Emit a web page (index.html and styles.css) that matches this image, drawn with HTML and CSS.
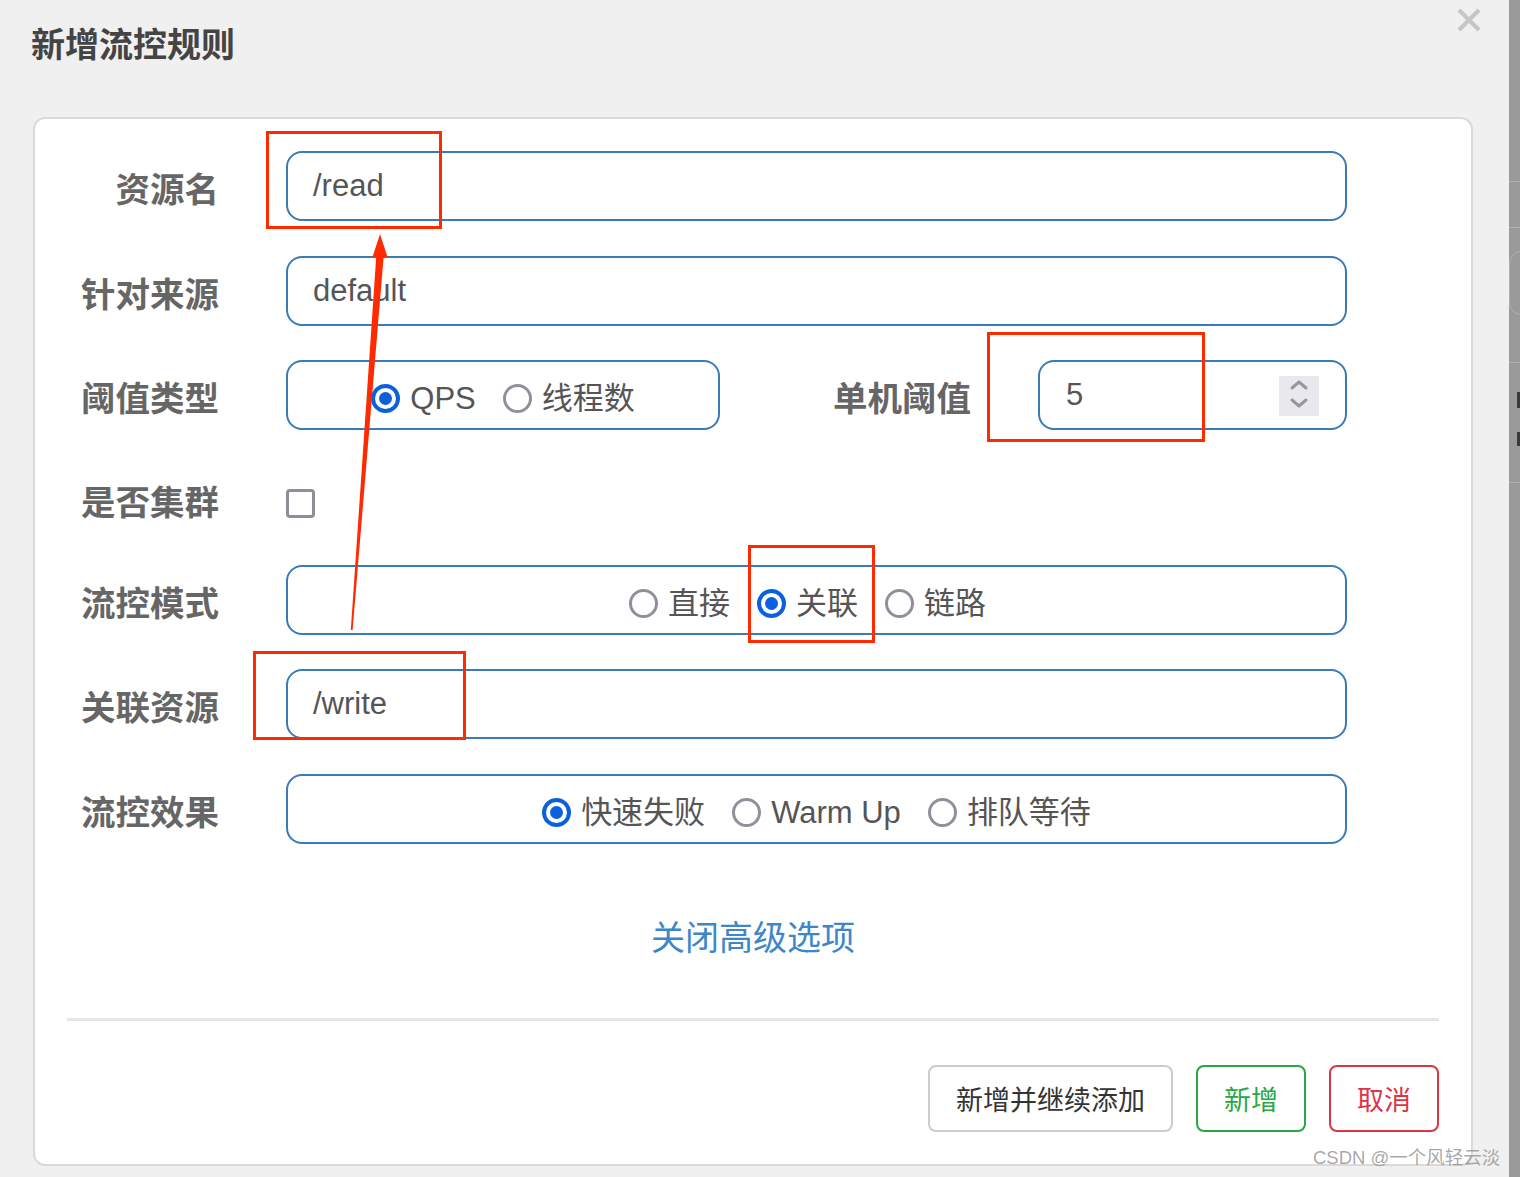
FILE: index.html
```html
<!DOCTYPE html>
<html lang="zh-CN">
<head>
<meta charset="utf-8">
<title>新增流控规则</title>
<link rel="stylesheet" href="styles.css">
</head>
<body>
<div class="page">
  <div class="modal">
    <div class="modal-header">
      <h1 class="title">新增流控规则</h1>
      <span class="close" aria-label="关闭">
        <svg width="24" height="24" viewBox="0 0 24 24"><path d="M2 2 L22 22 M22 2 L2 22" stroke="#c6c6c6" stroke-width="4.2" stroke-linecap="butt" fill="none"/></svg>
      </span>
    </div>
    <div class="card">
      <div class="form-row r1">
        <span class="label">资源名</span>
        <div class="control text">/read</div>
      </div>
      <div class="form-row r2">
        <span class="label">针对来源</span>
        <div class="control text">default</div>
      </div>
      <div class="form-row r3">
        <span class="label">阈值类型</span>
        <div class="control radios narrow">
          <span class="radio-item"><span class="radio on"></span>QPS</span>
          <span class="radio-item"><span class="radio"></span>线程数</span>
        </div>
        <span class="label label-mid">单机阈值</span>
        <div class="control number">
          <span class="num-value">5</span>
          <span class="spinner">
            <svg width="40" height="40" viewBox="0 0 40 40"><path d="M13 12 L20 6 L27 12 M13 24 L20 30 L27 24" stroke="#9797a0" stroke-width="3" fill="none" stroke-linecap="round" stroke-linejoin="round"/></svg>
          </span>
        </div>
      </div>
      <div class="form-row r4">
        <span class="label">是否集群</span>
        <span class="checkbox"></span>
      </div>
      <div class="form-row r5">
        <span class="label">流控模式</span>
        <div class="control radios shift">
          <span class="radio-item"><span class="radio"></span>直接</span>
          <span class="radio-item"><span class="radio on"></span>关联</span>
          <span class="radio-item"><span class="radio"></span>链路</span>
        </div>
      </div>
      <div class="form-row r6">
        <span class="label">关联资源</span>
        <div class="control text">/write</div>
      </div>
      <div class="form-row r7">
        <span class="label">流控效果</span>
        <div class="control radios">
          <span class="radio-item"><span class="radio on"></span>快速失败</span>
          <span class="radio-item"><span class="radio"></span>Warm Up</span>
          <span class="radio-item"><span class="radio"></span>排队等待</span>
        </div>
      </div>
      <div class="advanced"><a class="link">关闭高级选项</a></div>
      <div class="footer">
        <div class="divider"></div>
        <div class="actions">
          <button class="btn btn-default">新增并继续添加</button>
          <button class="btn btn-green">新增</button>
          <button class="btn btn-red">取消</button>
        </div>
      </div>
    </div>
  </div>
  <div class="strip">
    <div class="strip-line l1"></div>
    <div class="strip-line l2"></div>
    <div class="strip-round"></div>
    <div class="strip-line l3"></div>
    <div class="strip-frag f1"></div>
    <div class="strip-frag f2"></div>
    <div class="strip-line l4"></div>
  </div>
</div>

<div class="mark box1"></div>
<div class="mark box2"></div>
<div class="mark box3"></div>
<div class="mark box4"></div>
<svg class="arrow" width="1520" height="1177" viewBox="0 0 1520 1177">
  <polygon points="350.8,630 376.2,257 372.5,257 380,234 387.5,257 383.6,257 352.6,630" fill="#ff2a00"/>
</svg>
<div class="watermark">CSDN @一个风轻云淡</div>
</body>
</html>
```

FILE: styles.css
```css
* { box-sizing: border-box; }

html, body {
  margin: 0;
  padding: 0;
}

body {
  width: 1520px;
  height: 1177px;
  overflow: hidden;
  position: relative;
  font-family: "Liberation Sans", "Noto Sans CJK SC", sans-serif;
  background: #f0f0f0;
}

.page {
  display: flex;
  width: 1520px;
  height: 1177px;
}

.modal {
  width: 1509px;
  height: 1177px;
  background: #f0f0f0;
  display: flex;
  flex-direction: column;
}

.modal-header {
  height: 90px;
  display: flex;
  justify-content: space-between;
  align-items: flex-start;
  padding: 0 28px 0 31px;
}

.title {
  margin: 0;
  font-size: 34px;
  line-height: 90px;
  font-weight: 700;
  color: #444;
}

.close {
  margin-top: 8px;
  width: 24px;
  height: 24px;
  display: block;
}

.close svg { display: block; }

.card {
  margin: 27px 0 0 33px;
  width: 1440px;
  height: 1049px;
  background: #fff;
  border: 2px solid #dadada;
  border-radius: 12px;
  padding-top: 32px;
}

.form-row {
  display: flex;
  align-items: center;
  height: 70px;
}

.r1 { margin-bottom: 35px; }
.r2 { margin-bottom: 34px; }
.r3 { margin-bottom: 34px; }
.r4 { margin-bottom: 31px; }
.r5 { margin-bottom: 34px; }
.r6 { margin-bottom: 35px; }

.label {
  width: 184px;
  margin-right: 67px;
  text-align: right;
  font-size: 34.5px;
  font-weight: 700;
  color: #666;
  padding-top: 8px;
  line-height: 62px;
  flex-shrink: 0;
}

.label-mid {
  width: 251px;
  margin-right: 67px;
}

.control {
  width: 1061px;
  height: 70px;
  border: 2px solid #3a7ab8;
  border-radius: 16px;
  display: flex;
  align-items: center;
  flex-shrink: 0;
  font-size: 31px;
  color: #555;
}

.control.text {
  padding-left: 25px;
}

.control.radios {
  justify-content: center;
  gap: 27px;
  padding-top: 7px;
}

.control.narrow {
  width: 434px;
}

.control.shift {
  padding-right: 18px;
}

.radio-item {
  display: inline-flex;
  align-items: center;
  gap: 10px;
  line-height: 40px;
}

.radio {
  width: 29px;
  height: 29px;
  border-radius: 50%;
  border: 3px solid #908f9b;
  background: #fff;
  display: inline-flex;
  align-items: center;
  justify-content: center;
  flex-shrink: 0;
}

.radio.on {
  border: 4px solid #0b61dc;
}

.radio.on::after {
  content: "";
  width: 13px;
  height: 13px;
  border-radius: 50%;
  background: #0b61dc;
}

.control.number {
  width: 309px;
  padding-left: 26px;
  padding-right: 26px;
  justify-content: space-between;
}

.num-value {
  line-height: 40px;
}

.spinner {
  width: 40px;
  height: 40px;
  background: #e9e9ed;
  display: block;
  margin-top: 1px;
}

.spinner svg { display: block; }

.checkbox {
  width: 29px;
  height: 29px;
  border: 3px solid #8e8e98;
  border-radius: 4px;
  margin-top: 9px;
  background: #fff;
  display: block;
}

.advanced {
  margin-top: 64px;
  height: 60px;
  text-align: center;
}

.link {
  font-size: 34px;
  line-height: 60px;
  color: #3d87c8;
  text-decoration: none;
}

.footer {
  padding: 0 32px;
}

.divider {
  margin-top: 50px;
  height: 3px;
  background: #e6e6e6;
}

.actions {
  margin-top: 44px;
  display: flex;
  justify-content: flex-end;
  gap: 23px;
}

.btn {
  height: 67px;
  border: 2px solid #ccc;
  border-radius: 8px;
  background: #fff;
  font-family: "Liberation Sans", "Noto Sans CJK SC", sans-serif;
  font-size: 27px;
  padding: 0 26px;
  color: #333;
}

.btn-green {
  border-color: #28a745;
  color: #28a745;
}

.btn-red {
  border-color: #dc3545;
  color: #dc3545;
}

.strip {
  width: 11px;
  height: 1177px;
  background: #9a9a9a;
  position: relative;
  overflow: hidden;
}

.strip-line {
  position: absolute;
  left: 0;
  width: 11px;
  height: 1px;
  background: #b0b0b0;
}

.l1 { top: 181px; }
.l2 { top: 227px; }
.l3 { top: 362px; }
.l4 { top: 482px; }

.strip-round {
  position: absolute;
  left: 0;
  top: 251px;
  width: 30px;
  height: 64px;
  border: 1px solid #b0b0b0;
  border-radius: 12px;
}

.strip-frag {
  position: absolute;
  left: 8px;
  width: 3px;
  background: #3a3a3a;
}

.f1 { top: 392px; height: 16px; }
.f2 { top: 432px; height: 14px; }

.mark {
  position: absolute;
  border: 3px solid #ff2a00;
}

.box1 { left: 266px; top: 131px; width: 176px; height: 98px; }
.box2 { left: 987px; top: 332px; width: 218px; height: 110px; }
.box3 { left: 748px; top: 545px; width: 127px; height: 98px; }
.box4 { left: 253px; top: 651px; width: 213px; height: 89px; }

.arrow {
  position: absolute;
  left: 0;
  top: 0;
  pointer-events: none;
}

.watermark {
  position: absolute;
  left: 1313px;
  top: 1144px;
  font-size: 18.5px;
  line-height: 28px;
  color: rgba(140, 140, 140, 0.75);
  white-space: nowrap;
}
```
